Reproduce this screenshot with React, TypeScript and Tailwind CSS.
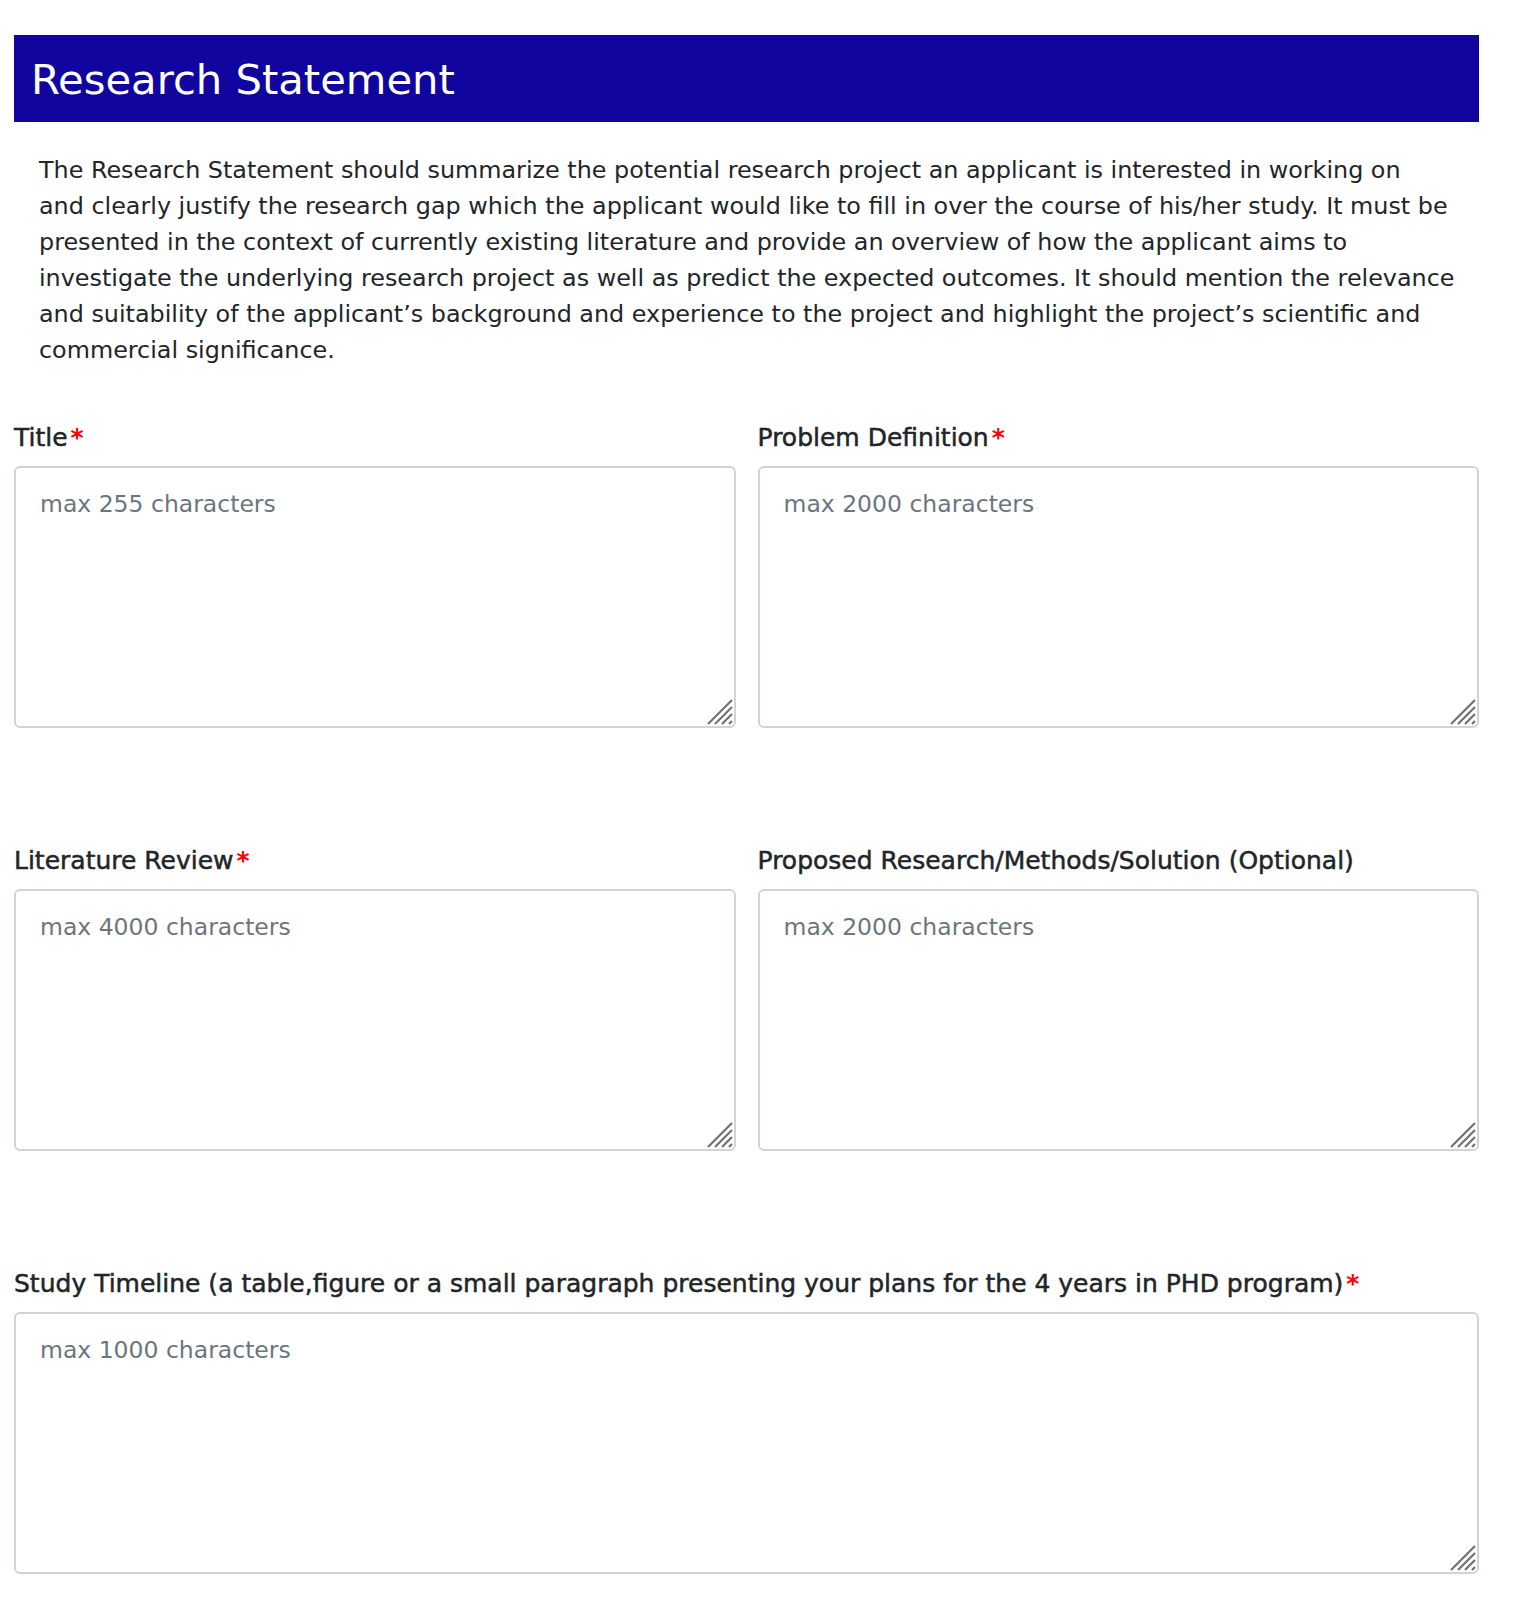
import React from 'react';

interface FieldProps {
  label: string;
  placeholder: string;
  required?: boolean;
}

// corner grip drawn over the textarea (native one is too small in headless chrome)
function ResizeGrip() {
  return (
    <svg
      width="26"
      height="26"
      viewBox="0 0 26 26"
      className="absolute right-[3px] bottom-[3px] pointer-events-none"
    >
      <g stroke="#6f6f6f" strokeWidth="2.2" strokeLinecap="butt">
        <line x1="1" y1="25" x2="25" y2="1" />
        <line x1="8" y1="25" x2="25" y2="8" />
        <line x1="15" y1="25" x2="25" y2="15" />
        <line x1="22" y1="25" x2="25" y2="22" />
      </g>
    </svg>
  );
}

function Field({ label, placeholder, required = false }: FieldProps) {
  return (
    <div className="flex flex-col">
      <label className="text-[25px] leading-[36px] text-[#212529] mb-[10px] [-webkit-text-stroke:0.5px_#212529]">
        {label}
        {required && (
          <span className="text-[#ff0000] font-bold ml-[3px] [-webkit-text-stroke:0px]">*</span>
        )}
      </label>
      <div className="relative">
        <textarea
          placeholder={placeholder}
          className="block w-full h-[262px] resize-none border-2 border-[#ced4da] rounded-[6px] px-6 pt-[18px] pb-3 text-[23.5px] leading-[36px] text-[#212529] placeholder:text-[#6c757d] outline-none bg-white"
        />
        <ResizeGrip />
      </div>
    </div>
  );
}

const paragraphLines = [
  'The Research Statement should summarize the potential research project an applicant is interested in working on',
  'and clearly justify the research gap which the applicant would like to fill in over the course of his/her study. It must be',
  'presented in the context of currently existing literature and provide an overview of how the applicant aims to',
  'investigate the underlying research project as well as predict the expected outcomes. It should mention the relevance',
  'and suitability of the applicant’s background and experience to the project and highlight the project’s scientific and',
  'commercial significance.',
];

export default function App() {
  return (
    <div
      className="min-h-screen bg-white pt-[35px] pl-[14px] pr-[37px] pb-[54px]"
      style={{ fontFamily: '"DejaVu Sans", sans-serif' }}
    >
      <div className="h-[87px] bg-[#10069f] pt-[20px] pl-[17px]">
        <h2 className="text-[41.7px] leading-[50px] text-white">Research Statement</h2>
      </div>

      <p className="mt-[30px] px-[25px] text-[23.85px] leading-[36px] text-[#212529] whitespace-nowrap">
        {paragraphLines.map((line) => (
          <span key={line} className="block">
            {line}
          </span>
        ))}
      </p>

      <div className="mt-[52px] grid grid-cols-2 gap-x-[22px] gap-y-[115px]">
        <Field label="Title" placeholder="max 255 characters" required />
        <Field label="Problem Definition" placeholder="max 2000 characters" required />
        <Field label="Literature Review" placeholder="max 4000 characters" required />
        <Field label="Proposed Research/Methods/Solution (Optional)" placeholder="max 2000 characters" />
        <div className="col-span-2">
          <Field
            label="Study Timeline (a table,figure or a small paragraph presenting your plans for the 4 years in PHD program)"
            placeholder="max 1000 characters"
            required
          />
        </div>
      </div>
    </div>
  );
}
